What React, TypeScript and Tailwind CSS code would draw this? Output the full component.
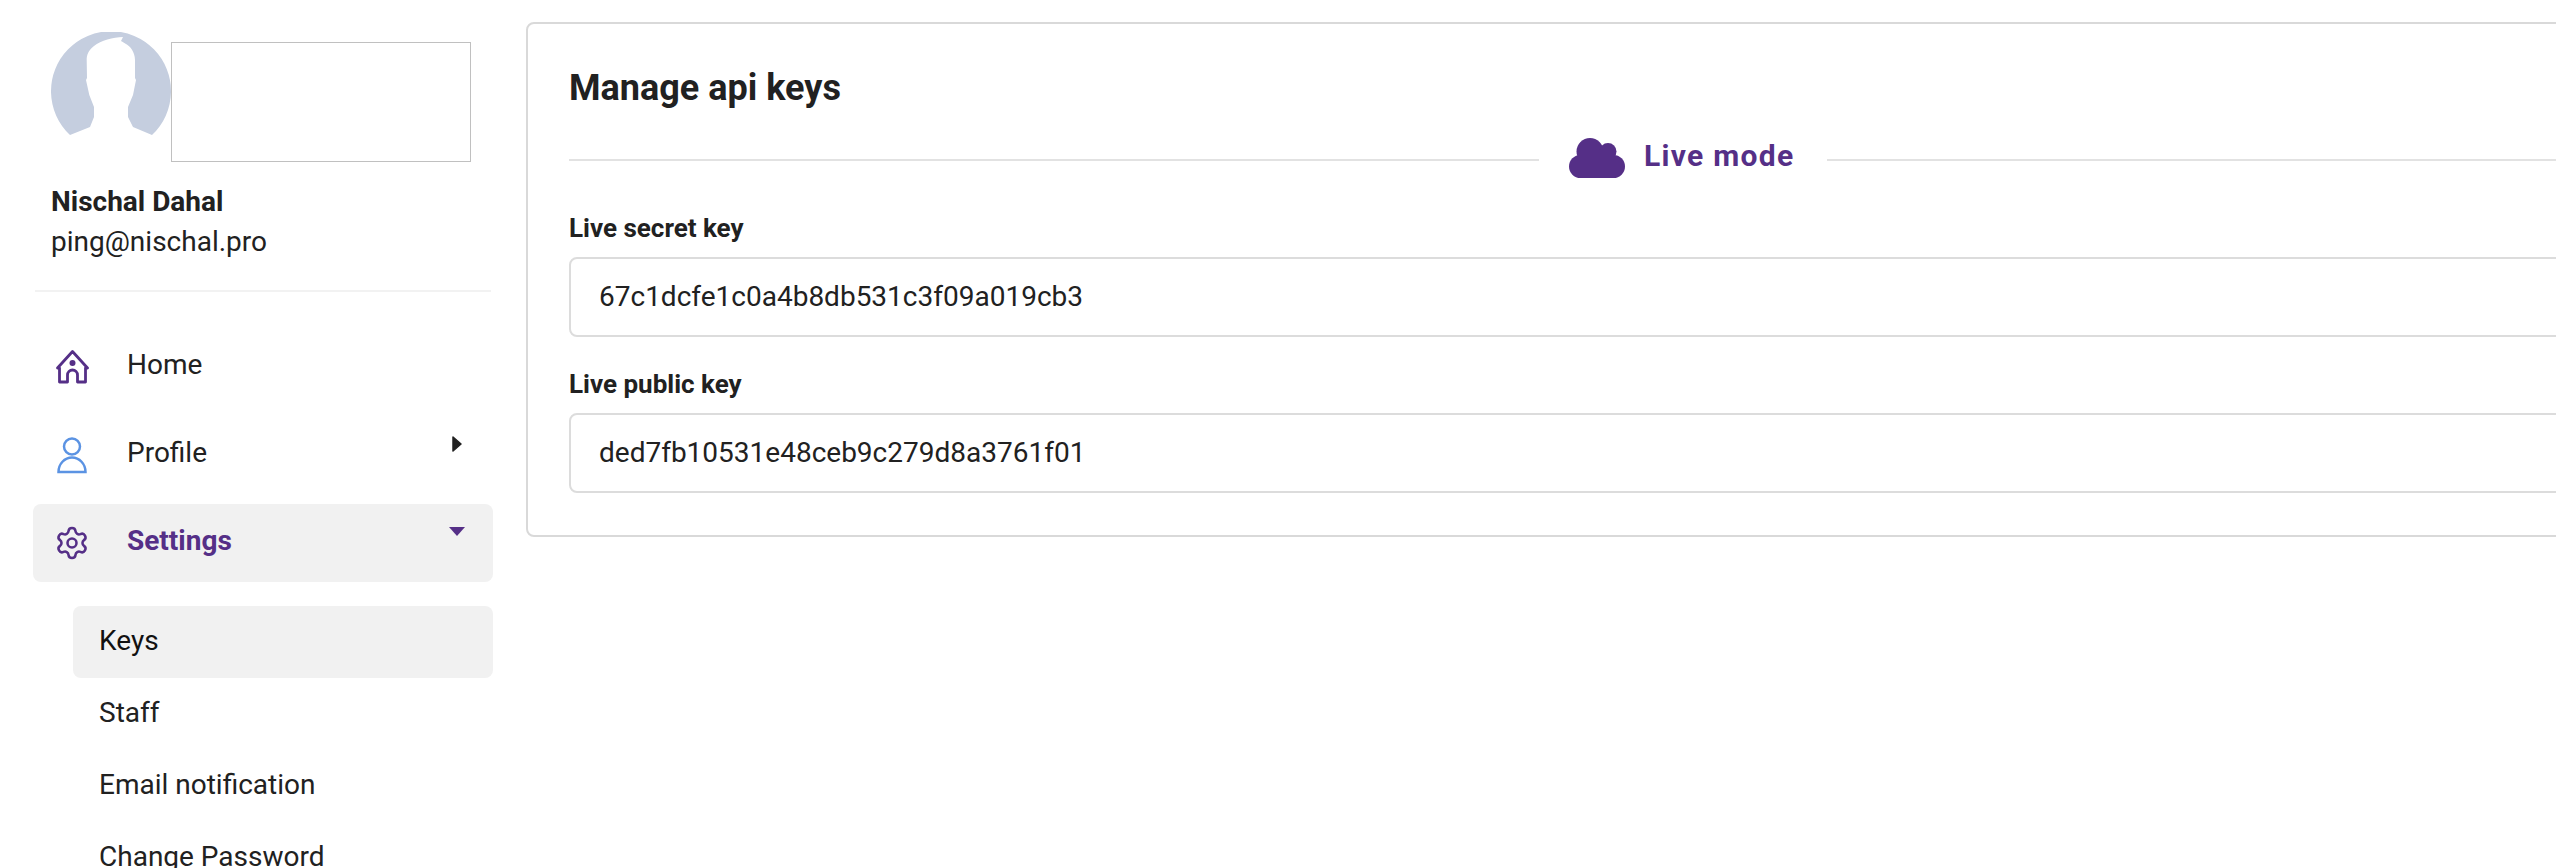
import { Settings } from 'lucide-react';

const purple = '#552f87';

function Avatar() {
  return (
    <svg width="120" height="120" viewBox="0 0 120 120" className="shrink-0" aria-hidden="true">
      <path
        fill="#c5cedf"
        d="M19 103 A60 60 0 1 1 101 103 L82 95 L77 85 L77 75 L82 63 L85 48 L84 46 L84 28 C84 20 79 14 75 12 C72 10 70 9 70 9 L72 5 C62 5.500 50 8 43 14 C37 19 35.700 23 35.700 28 L36 46 L35 48 L38.300 63 L43 75 L43 85 L39 95 Z"
      />
    </svg>
  );
}

function HomeIcon() {
  return (
    <svg width="33" height="34" viewBox="0 0 33 34" fill="none" stroke={purple} strokeWidth="2.800" strokeLinejoin="round" aria-hidden="true">
      <path d="M3.500 18 H1.500 L16.500 1.500 L31.500 18 H29.500 V32 H21.500 V25 a5 5 0 0 0 -10 0 V32 H3.500 Z" />
      <circle cx="16.500" cy="13" r="3" fill={purple} stroke="none" />
    </svg>
  );
}

function ProfileIcon() {
  return (
    <svg width="31" height="37" viewBox="0 0 31 37" fill="none" stroke="#5b93e3" strokeWidth="2.500" aria-hidden="true">
      <circle cx="15" cy="9.500" r="8" />
      <path d="M1.500 35 a13.500 14.500 0 0 1 27 0 Z" />
    </svg>
  );
}

function CloudIcon() {
  return (
    <svg width="56" height="40" viewBox="0 0 56 40" fill={purple} className="mb-[4px] shrink-0" aria-hidden="true">
      <circle cx="21" cy="13.500" r="13.500" />
      <circle cx="39" cy="13.500" r="8.500" />
      <circle cx="11.500" cy="28.500" r="11.500" />
      <circle cx="44.500" cy="28.500" r="11.500" />
      <rect x="11" y="12" width="34" height="28" />
    </svg>
  );
}

function CaretRight() {
  return (
    <svg width="10" height="16" viewBox="0 0 10 16" fill="#212121" stroke="#212121" strokeWidth="1.500" strokeLinejoin="round" aria-hidden="true">
      <path d="M1 1 L9 8 L1 15 Z" />
    </svg>
  );
}

function CaretDown() {
  return (
    <svg width="16" height="9" viewBox="0 0 16 9" fill={purple} aria-hidden="true">
      <path d="M0 0 H16 L8 9 Z" />
    </svg>
  );
}

function KeyField({ label, value, gap }: { label: string; value: string; gap: string }) {
  return (
    <div className={gap}>
      <div className="text-[26px] leading-[40px] font-bold">{label}</div>
      <div className="mt-[9px] flex h-[80px] items-center rounded-lg border-2 border-[#dcdcdc] pl-[28px] text-[28px]">
        {value}
      </div>
    </div>
  );
}

export default function App() {
  return (
    <div className="flex h-[868px] overflow-hidden bg-white text-[#212121] [font-family:Roboto,sans-serif]">
      <aside className="w-[526px] shrink-0 pt-[32px]">
        <div className="flex pl-[51px]">
          <Avatar />
          <div className="mt-[10px] h-[120px] w-[300px] border border-[#c0c0c0]" />
        </div>
        <div className="mt-[20px] pl-[51px] text-[28px] leading-[40px]">
          <div className="font-bold">Nischal Dahal</div>
          <div>ping@nischal.pro</div>
        </div>
        <div className="mx-[35px] mt-[28px] h-[2px] bg-[#f2f2f2]" />

        <nav className="mx-[33px] mt-[36px] text-[28px]">
          <a className="mb-[10px] flex h-[78px] items-center">
            <span className="flex w-[78px] justify-center"><HomeIcon /></span>
            <span className="mb-[5px] ml-[16px]">Home</span>
          </a>
          <a className="mb-[10px] flex h-[78px] items-center">
            <span className="flex w-[78px] justify-center"><ProfileIcon /></span>
            <span className="mb-[5px] ml-[16px]">Profile</span>
            <span className="mr-[28px] mb-[22px] ml-auto flex w-[16px] justify-center"><CaretRight /></span>
          </a>
          <a className="flex h-[78px] items-center rounded-lg bg-[#f1f1f1] font-bold text-[#552f87]">
            <span className="flex w-[78px] justify-center"><Settings size={36} strokeWidth={1.7} color={purple} /></span>
            <span className="mb-[5px] ml-[16px]">Settings</span>
            <span className="mr-[28px] mb-[23px] ml-auto flex w-[16px] justify-center"><CaretDown /></span>
          </a>
          <div className="mt-[24px] ml-[40px]">
            <a className="flex h-[72px] items-center rounded-lg bg-[#f1f1f1] pl-[26px] text-[#111111]">
              <span className="mb-[2px]">Keys</span>
            </a>
            <a className="flex h-[72px] items-center pl-[26px]"><span className="mb-[2px]">Staff</span></a>
            <a className="flex h-[72px] items-center pl-[26px]"><span className="mb-[2px]">Email notification</span></a>
            <a className="flex h-[72px] items-center pl-[26px]"><span className="mb-[2px]">Change Password</span></a>
          </div>
        </nav>
      </aside>

      <main className="pt-[22px]">
        <section className="w-[2200px] rounded-lg border-2 border-[#d9d9d9] px-[41px] pb-[42px]">
          <h1 className="mt-[44px] text-[36px] leading-[40px] font-bold">Manage api keys</h1>
          <div className="mt-[32px] flex h-[40px] items-center">
            <div className="h-[2px] w-[970px] bg-[#e2e2e2]" />
            <div className="ml-[30px] flex items-center">
              <CloudIcon />
              <span className="mb-[10px] ml-[19px] text-[30px] font-bold tracking-[1.3px] text-[#552f87]">Live mode</span>
            </div>
            <div className="ml-[32px] h-[2px] flex-1 bg-[#e2e2e2]" />
          </div>
          <KeyField gap="mt-[28px]" label="Live secret key" value="67c1dcfe1c0a4b8db531c3f09a019cb3" />
          <KeyField gap="mt-[27px]" label="Live public key" value="ded7fb10531e48ceb9c279d8a3761f01" />
        </section>
      </main>
    </div>
  );
}
